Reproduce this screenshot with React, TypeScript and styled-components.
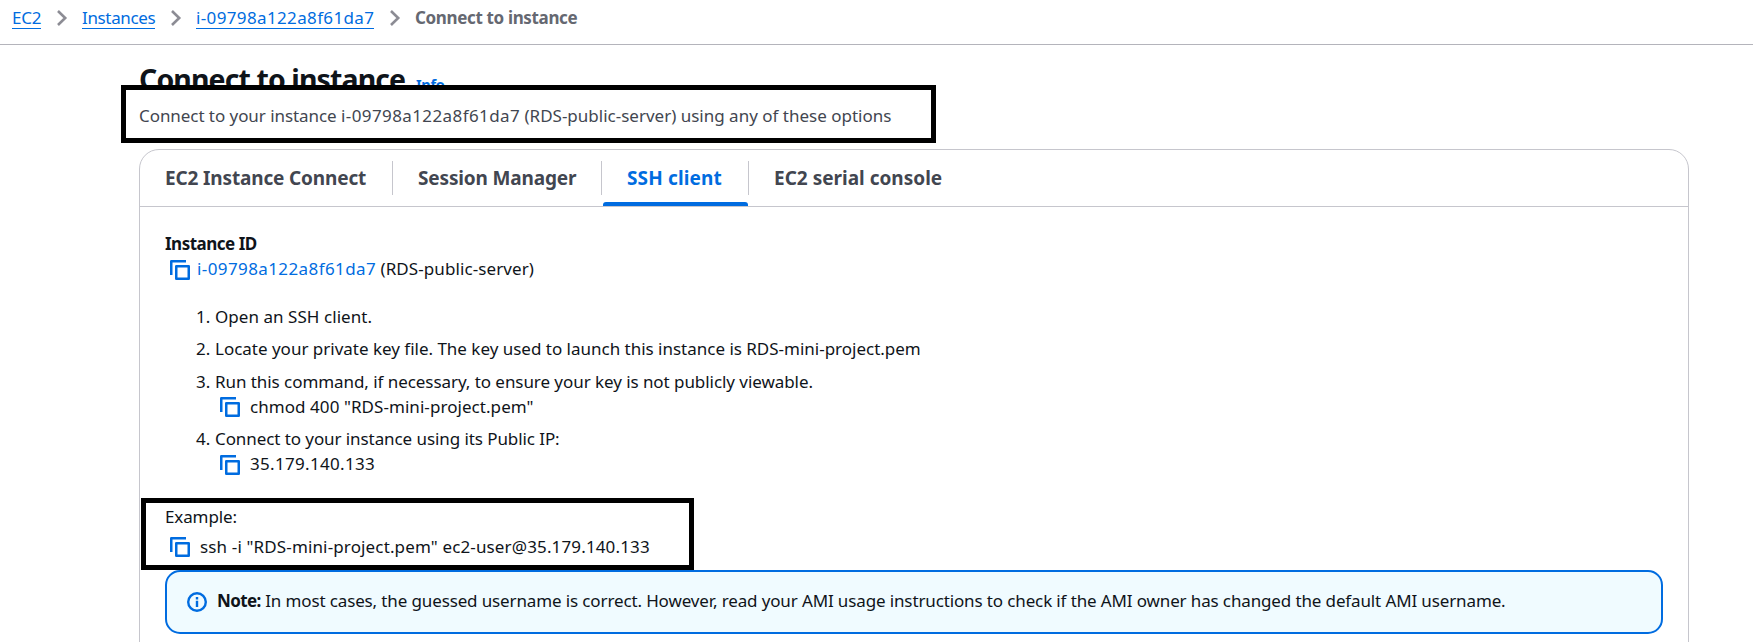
import React from "react";
import styled, { createGlobalStyle, css } from "styled-components";

const color = {
  text: "#0f141a",
  secondary: "#424650",
  muted: "#656871",
  link: "#006ce0",
  line: "#c6c6cd",
  headerLine: "#b4b4bb",
  infoBg: "#f0fbff",
};

const GlobalStyle = createGlobalStyle`
  * { box-sizing: border-box; }
  body {
    margin: 0;
    background: #fff;
    color: ${color.text};
    font-family: "Noto Sans", "Open Sans", sans-serif;
    font-size: 17px;
    line-height: 25px;
    overflow: hidden;
  }
`;

const Page = styled.div`
  height: 642px;
  overflow: hidden;
`;

/* Text run with its own tracking */
const T = styled.span<{ $track?: number }>`
  letter-spacing: ${(p) => p.$track ?? 0}px;
  white-space: nowrap;
`;

const Breadcrumbs = styled.nav`
  display: flex;
  align-items: flex-start;
  height: 45px;
  padding: 5px 0 0 12px;
  border-bottom: 1px solid ${color.headerLine};
`;

const Crumb = styled.a<{ $width: number }>`
  width: ${(p) => p.$width}px;
  height: 24px;
  color: ${color.link};
  border-bottom: 1px solid ${color.link};
`;

const CurrentCrumb = styled.span`
  color: ${color.muted};
  font-weight: 700;
`;

const Chevron = styled.svg`
  width: 12px;
  height: 18px;
  margin: 4px 14px 0 15px;
  flex: none;
`;

const Main = styled.main`
  padding: 17px 64px 0 139px;
`;

const Annotated = styled.div`
  position: relative;
`;

const Frame = styled.div<{ $left: number; $top: number; $width: number; $height: number }>`
  position: absolute;
  left: ${(p) => p.$left}px;
  top: ${(p) => p.$top}px;
  width: ${(p) => p.$width}px;
  height: ${(p) => p.$height}px;
  border: 5px solid #000;
  pointer-events: none;
`;

const TitleRow = styled.div`
  display: flex;
  align-items: baseline;
  height: 41px;
`;

const Title = styled.h1`
  margin: 0;
  width: 277px;
  font-size: 28.5px;
  line-height: 34px;
  font-weight: 700;
`;

const InfoLink = styled.a`
  color: ${color.link};
  font-size: 14.5px;
  font-weight: 700;
`;

const Subtitle = styled.p`
  margin: 0;
  color: ${color.secondary};
`;

const Panel = styled.section`
  margin-top: 21px;
  height: 520px;
  border: 1px solid ${color.line};
  border-radius: 20px;
`;

const Tabs = styled.div`
  display: flex;
  height: 57px;
  border-bottom: 1px solid ${color.line};
`;

const Tab = styled.button<{ $active?: boolean; $width: number }>`
  position: relative;
  width: ${(p) => p.$width}px;
  padding: 0 0 0 25px;
  border: 0;
  background: none;
  font: 700 19px/25px "Noto Sans", "Open Sans", sans-serif;
  text-align: left;
  color: ${(p) => (p.$active ? color.link : color.secondary)};

  &:not(:last-child)::before {
    content: "";
    position: absolute;
    right: 0;
    top: 11px;
    width: 1px;
    height: 34px;
    background: ${color.line};
  }

  ${(p) =>
    p.$active &&
    css`
      &::after {
        content: "";
        position: absolute;
        left: 1px;
        right: 1px;
        bottom: 0;
        height: 4px;
        border-radius: 3px 3px 0 0;
        background: ${color.link};
      }
    `}
`;

const Body = styled.div`
  padding: 24px 25px 0 25px;
`;

const Label = styled.div`
  font-weight: 700;
`;

const CopyRow = styled.div<{ $gap?: number; $top?: number }>`
  display: flex;
  align-items: flex-start;
  gap: ${(p) => p.$gap ?? 10}px;
  margin-top: ${(p) => p.$top ?? 0}px;
  padding-left: 5px;
`;

const CopyGlyph = styled.svg<{ $drop: number }>`
  flex: none;
  width: 20px;
  height: 20px;
  margin-top: ${(p) => p.$drop}px;
`;

const Blue = styled.span`
  color: ${color.link};
`;

const Steps = styled.ol`
  list-style: none;
  margin: 23px 0 0;
  padding: 0 0 0 31px;
  display: flex;
  flex-direction: column;
  gap: 7.4px;
`;

const Step = styled.li`
  display: grid;
  grid-template-columns: 19px 1fr;
`;

const Example = styled.div`
  position: relative;
  margin-top: 27.8px;
  height: 66px;
`;

const Alert = styled.div`
  display: flex;
  align-items: center;
  gap: 10px;
  height: 64px;
  padding: 0 20px;
  border: 2px solid ${color.link};
  border-radius: 15px;
  background: ${color.infoBg};
`;

const AlertText = styled.div`
  padding-bottom: 3px;
`;

const InfoGlyph = styled.svg`
  flex: none;
  width: 20px;
  height: 20px;
`;

const Separator = () => (
  <Chevron viewBox="0 0 12 18" fill="none" stroke="#8c8c94" strokeWidth="2.6">
    <path d="M2 2l7.2 7L2 16" />
  </Chevron>
);

const CopyIcon = ({ drop = 3 }: { drop?: number }) => (
  <CopyGlyph $drop={drop} viewBox="0 0 20 20" fill="none" stroke={color.link} strokeWidth="2.5" strokeLinejoin="round">
    <path d="M1.25 15V1.25H16" />
    <rect x="6.25" y="6.25" width="12.5" height="12.5" />
  </CopyGlyph>
);

export default function App() {
  return (
    <Page>
      <GlobalStyle />
      <Breadcrumbs>
        <Crumb $width={29}><T $track={-0.2}>EC2</T></Crumb>
        <Separator />
        <Crumb $width={73}><T $track={-0.35}>Instances</T></Crumb>
        <Separator />
        <Crumb $width={178}><T $track={0.36}>i-09798a122a8f61da7</T></Crumb>
        <Separator />
        <CurrentCrumb><T $track={-0.35}>Connect to instance</T></CurrentCrumb>
      </Breadcrumbs>

      <Main>
        <Annotated>
          <TitleRow>
            <Title><T $track={-0.9}>Connect to instance</T></Title>
            <InfoLink><T $track={-0.3}>Info</T></InfoLink>
          </TitleRow>
          <Subtitle>
            <T $track={-0.06}>Connect to your instance </T>
            <T $track={0.4}>i-09798a122a8f61da7</T>
            <T> (RDS-public-server) using any of these options</T>
          </Subtitle>
          <Frame $left={-18} $top={23} $width={815} $height={58} />
        </Annotated>

        <Panel>
          <Tabs role="tablist">
            <Tab $width={253}><T $track={-0.15}>EC2 Instance Connect</T></Tab>
            <Tab $width={209}><T $track={-0.15}>Session Manager</T></Tab>
            <Tab $width={147} $active><T $track={0.15}>SSH client</T></Tab>
            <Tab $width={220}><T>EC2 serial console</T></Tab>
          </Tabs>

          <Body>
            <Label><T $track={-0.5}>Instance ID</T></Label>
            <CopyRow $gap={7}>
              <CopyIcon drop={4} />
              <div>
                <Blue><T $track={0.4}>i-09798a122a8f61da7</T></Blue>{" "}
                <T $track={0.09}>(RDS-public-server)</T>
              </div>
            </CopyRow>

            <Steps>
              <Step>
                <span>1.</span>
                <T $track={0.05}>Open an SSH client.</T>
              </Step>
              <Step>
                <span>2.</span>
                <T $track={-0.01}>Locate your private key file. The key used to launch this instance is RDS-mini-project.pem</T>
              </Step>
              <Step>
                <span>3.</span>
                <div>
                  <T $track={-0.06}>Run this command, if necessary, to ensure your key is not publicly viewable.</T>
                  <CopyRow>
                    <CopyIcon />
                    <T $track={0.06}>chmod 400 "RDS-mini-project.pem"</T>
                  </CopyRow>
                </div>
              </Step>
              <Step>
                <span>4.</span>
                <div>
                  <T $track={-0.08}>Connect to your instance using its Public IP:</T>
                  <CopyRow>
                    <CopyIcon drop={4} />
                    <T $track={0.32}>35.179.140.133</T>
                  </CopyRow>
                </div>
              </Step>
            </Steps>

            <Example>
              <T $track={-0.12}>Example:</T>
              <CopyRow $top={5}>
                <CopyIcon />
                <T $track={0.14}>ssh -i "RDS-mini-project.pem" ec2-user@35.179.140.133</T>
              </CopyRow>
              <Frame $left={-24} $top={-6} $width={553} $height={72} />
            </Example>

            <Alert>
              <InfoGlyph viewBox="0 0 20 20" fill="none" stroke={color.link} strokeWidth="2.4">
                <circle cx="10" cy="10" r="8.8" />
                <path d="M10 8.8V15M10 5v2.4" />
              </InfoGlyph>
              <AlertText>
                <strong><T $track={-0.6}>Note:</T></strong>{" "}
                <T $track={-0.13}>
                  In most cases, the guessed username is correct. However, read your AMI usage instructions to check if
                  the AMI owner has changed the default AMI username.
                </T>
              </AlertText>
            </Alert>
          </Body>
        </Panel>
      </Main>
    </Page>
  );
}
